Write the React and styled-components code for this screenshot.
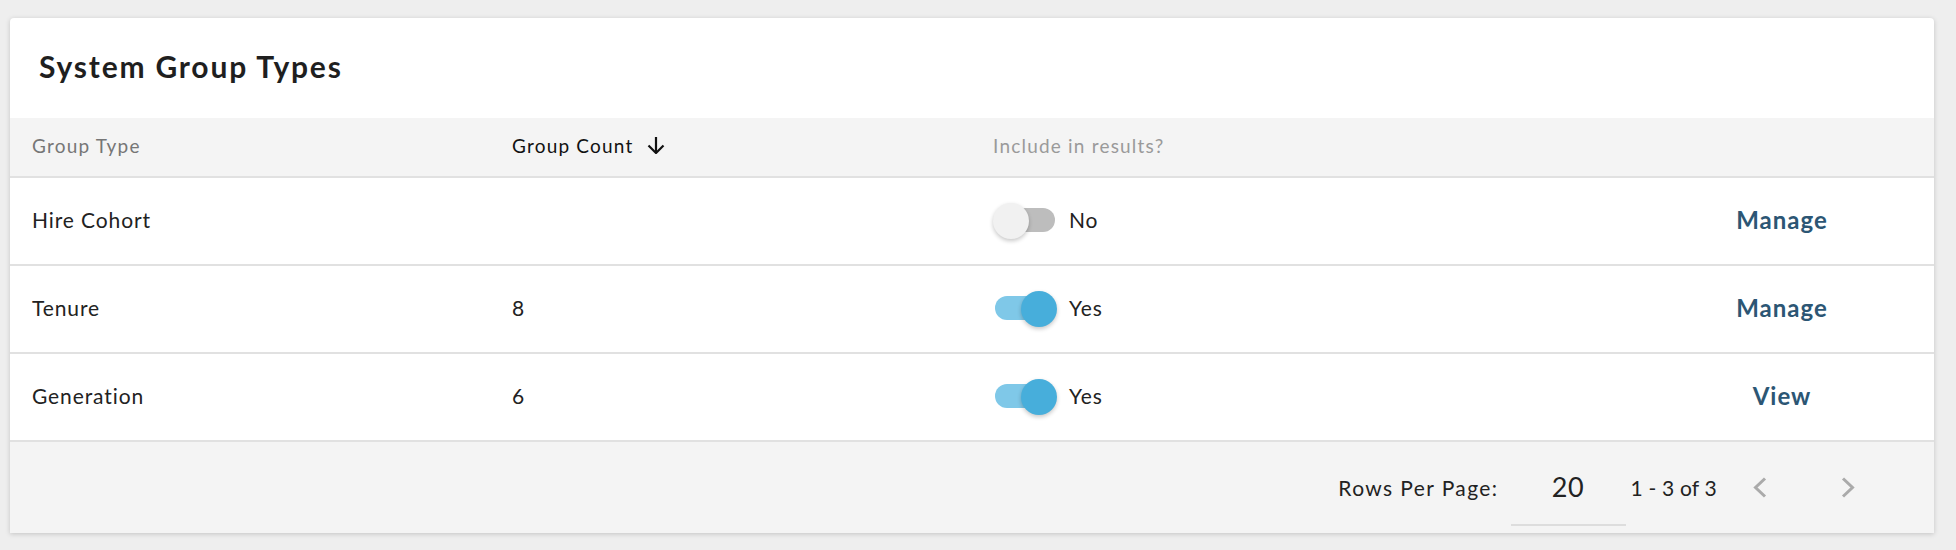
import React from "react";
import styled, { createGlobalStyle } from "styled-components";

const GlobalStyle = createGlobalStyle`
  body {
    margin: 0;
    background: #eeeeee;
    font-family: "Lato", "Liberation Sans", sans-serif;
    color: #222;
  }
`;

const groups = [
  { name: "Hire Cohort", count: "", included: false, action: "Manage" },
  { name: "Tenure", count: "8", included: true, action: "Manage" },
  { name: "Generation", count: "6", included: true, action: "View" },
];

const Page = styled.div`
  padding: 18px 22px 17px 10px;
`;

const Card = styled.section`
  background: #fff;
  border-radius: 4px 4px 0 0;
  box-shadow: 0 1px 5px rgba(0, 0, 0, 0.18);
  overflow: hidden;
`;

const Title = styled.h2`
  margin: 0;
  height: 100px;
  box-sizing: border-box;
  display: flex;
  align-items: center;
  padding: 0 0 4px 29px;
  font-size: 30px;
  letter-spacing: 1.8px;
  font-weight: 700;
  color: #1f1f1f;
`;

const Row = styled.div`
  display: grid;
  grid-template-columns: 480px 481px 1fr 200px;
  align-items: center;
  box-sizing: border-box;
  padding: 0 52px 3px 22px;
  height: ${(p) => (p.$head ? "60px" : "88px")};
  background: ${(p) => (p.$head ? "#f4f4f4" : "#fff")};
  border-bottom: 2px solid #e1e1e1;
  font-size: ${(p) => (p.$head ? "19px" : "21px")};
  letter-spacing: ${(p) => (p.$head ? "1.2px" : "0.9px")};
`;

const HeadCell = styled.div`
  color: ${(p) => p.$color};
  display: flex;
  align-items: center;
  gap: 14px;
`;

const Cell = styled.div`
  color: #222;
  display: flex;
  align-items: center;
`;

const Track = styled.span`
  position: relative;
  width: 60px;
  height: 24px;
  margin-left: 2px;
  border-radius: 12px;
  background: ${(p) => (p.$on ? "#7fc8e8" : "#bdbdbd")};
`;

const Thumb = styled.span`
  position: absolute;
  top: -5px;
  left: ${(p) => (p.$on ? "26px" : "-2px")};
  width: 36px;
  height: 36px;
  border-radius: 50%;
  background: ${(p) => (p.$on ? "#47aedb" : "#f1f1f1")};
  box-shadow: 0 2px 4px rgba(0, 0, 0, 0.22);
`;

const ToggleLabel = styled.span`
  margin-left: 14px;
  font-size: 21px;
  color: #222;
`;

const Action = styled.a`
  justify-self: center;
  font-size: 24px;
  letter-spacing: 1px;
  font-weight: 700;
  color: #2c5674;
  cursor: pointer;
`;

const Footer = styled.div`
  height: 91px;
  background: #f4f4f4;
  display: flex;
  align-items: center;
  justify-content: flex-end;
  padding-right: 62px;
  font-size: 21px;
  letter-spacing: 0.9px;
  color: #222;
`;

const RowsLabel = styled.span`
  letter-spacing: 1.4px;
`;

const RowsSelect = styled.div`
  width: 115px;
  height: 56px;
  margin: 0 5px 0 12px;
  display: flex;
  align-items: center;
  justify-content: center;
  font-size: 27px;
  letter-spacing: 0.5px;
  border-bottom: 2px solid #dddddd;
  box-sizing: border-box;
  position: relative;
  top: 10px;
  padding-bottom: 20px;
`;

const Range = styled.span`
  margin-right: 19px;
  letter-spacing: 0.2px;
`;

const PageButton = styled.button`
  width: 48px;
  height: 48px;
  border: 0;
  background: none;
  padding: 0;
  display: flex;
  align-items: center;
  justify-content: center;
  & + & {
    margin-left: 40px;
  }
`;

const SortArrow = () => (
  <svg width="18" height="17" viewBox="0 0 18 17" fill="none" stroke="#111" strokeWidth="2.2">
    <line x1="9" y1="0" x2="9" y2="15.5" />
    <polyline points="1.5,8.5 9,16 16.5,8.5" />
  </svg>
);

const Chevron = ({ dir }) => (
  <svg width="14" height="21" viewBox="0 0 14 21" fill="none" stroke="#aaaaaa" strokeWidth="3">
    {dir === "left" ? (
      <polyline points="12,1.5 2.5,10.5 12,19.5" />
    ) : (
      <polyline points="2,1.5 11.5,10.5 2,19.5" />
    )}
  </svg>
);

const Toggle = ({ on }) => (
  <Cell>
    <Track $on={on}>
      <Thumb $on={on} />
    </Track>
    <ToggleLabel>{on ? "Yes" : "No"}</ToggleLabel>
  </Cell>
);

export default function App() {
  return (
    <Page>
      <GlobalStyle />
      <Card>
        <Title>System Group Types</Title>
        <Row $head>
          <HeadCell $color="#767676">Group Type</HeadCell>
          <HeadCell $color="#111">
            Group Count <SortArrow />
          </HeadCell>
          <HeadCell $color="#9a9a9a">Include in results?</HeadCell>
          <div />
        </Row>
        {groups.map((g) => (
          <Row key={g.name}>
            <Cell>{g.name}</Cell>
            <Cell>{g.count}</Cell>
            <Toggle on={g.included} />
            <Action>{g.action}</Action>
          </Row>
        ))}
        <Footer>
          <RowsLabel>Rows Per Page:</RowsLabel>
          <RowsSelect>20</RowsSelect>
          <Range>1 - 3 of 3</Range>
          <PageButton>
            <Chevron dir="left" />
          </PageButton>
          <PageButton>
            <Chevron dir="right" />
          </PageButton>
        </Footer>
      </Card>
    </Page>
  );
}
